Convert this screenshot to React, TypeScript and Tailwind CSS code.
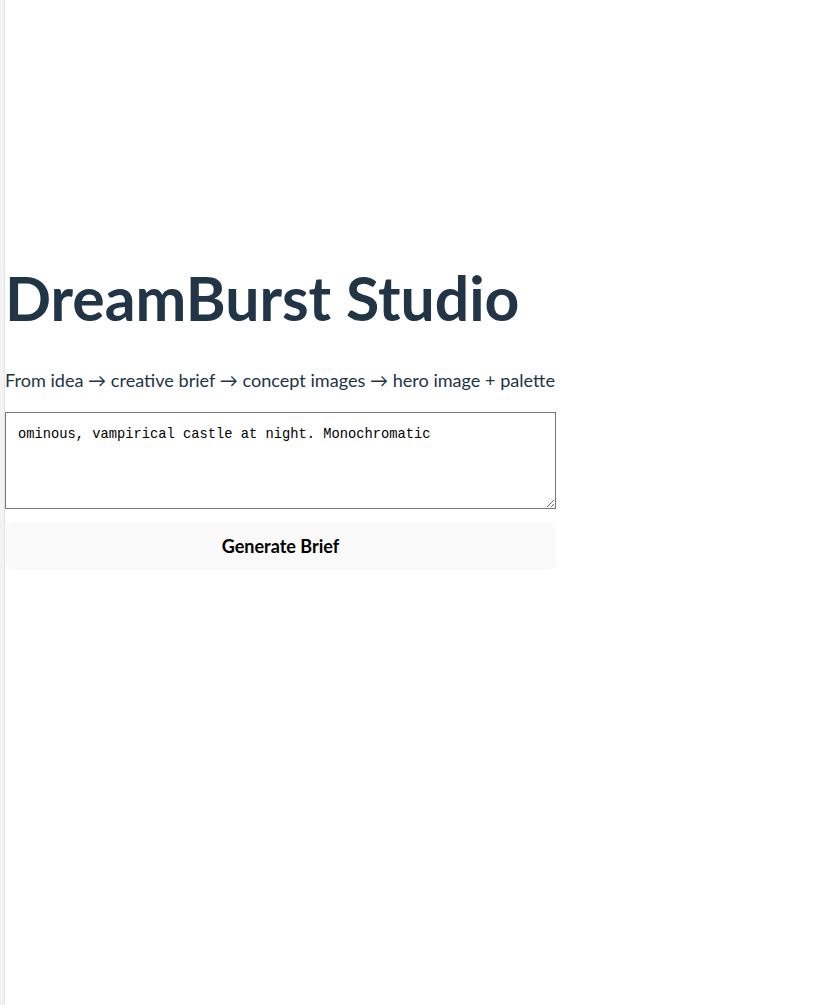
import { useState } from 'react';

export default function App() {
    const [idea, setIdea] = useState('ominous, vampirical castle at night. Monochromatic');

    return (
        <div className="flex min-h-[1005px] bg-white font-['Lato',sans-serif] text-[#213547]">
            <div className="w-[4px] shrink-0 bg-[#f3f3f3]" />
            <div className="w-px shrink-0 bg-[#e3e3e3]" />
            <div className="w-[551px] pt-[260px]">
                <h1 className="whitespace-nowrap text-[60.7px] font-bold leading-[76px]">DreamBurst Studio</h1>
                <p className="mt-[32px] whitespace-nowrap text-[18.1px] leading-[24px]">From idea → creative brief → concept images → hero image + palette</p>
                <textarea value={idea} onChange={e => setIdea(e.target.value)}
                    className="mt-[20px] block h-[97px] w-full border border-[#767676] px-[12px] pt-[13px] pb-[11px] font-['Liberation_Mono',monospace] text-[13.75px] leading-[18px] text-black" />
                <button className="mt-[13px] block h-[48px] w-full rounded-[8px] bg-[#f9f9f9] text-[18px] font-bold text-black">
                    Generate Brief
                </button>
            </div>
        </div>
    );
}
